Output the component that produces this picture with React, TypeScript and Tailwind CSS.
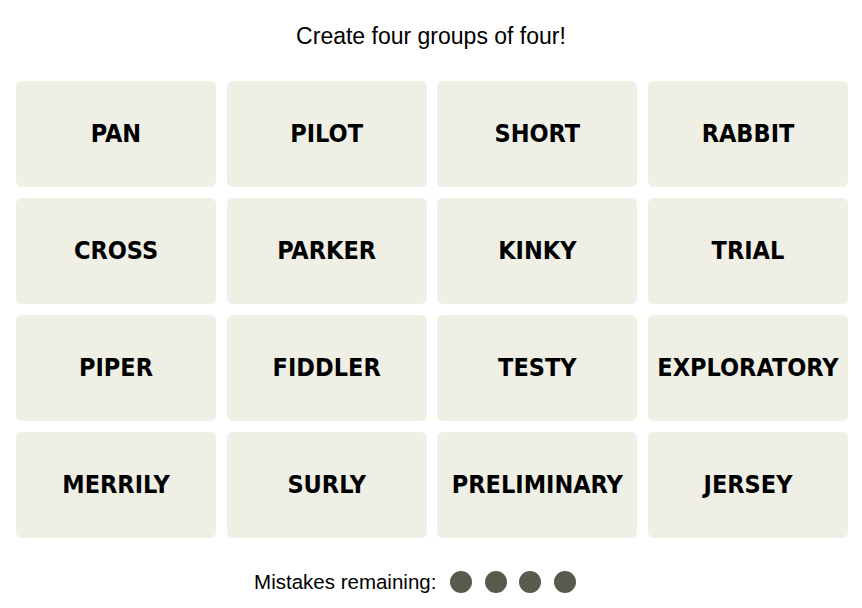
const words = [
  "PAN", "PILOT", "SHORT", "RABBIT",
  "CROSS", "PARKER", "KINKY", "TRIAL",
  "PIPER", "FIDDLER", "TESTY", "EXPLORATORY",
  "MERRILY", "SURLY", "PRELIMINARY", "JERSEY",
];

const font = { fontFamily: '"Liberation Sans", Arial, sans-serif' };
const tileFont = { fontFamily: '"DejaVu Sans Condensed", "Liberation Sans", Arial, sans-serif' };

export default function App() {
  return (
    <div className="w-[862px] h-[608px] bg-white text-black flex flex-col items-center" style={font}>
      <p className="mt-[22px] h-[28px] text-[23px] leading-[28px]">Create four groups of four!</p>

      <div className="mt-[31px] ml-[2px] w-[832px] grid grid-cols-4 gap-x-[10.67px] gap-y-[11.67px]">
        {words.map((w) => (
          <div
            key={w}
            className="h-[105.5px] rounded-md bg-[#efefe6] flex items-center justify-center text-[25px] font-bold uppercase"
            style={tileFont}
          >
            {w}
          </div>
        ))}
      </div>

      <div className="mt-[29px] mr-[32px] flex items-center gap-[14px] text-[20.5px]">
        <span>Mistakes remaining:</span>
        <div className="flex gap-[12.5px]">
          {[0, 1, 2, 3].map((i) => (
            <span key={i} className="w-[22px] h-[22px] rounded-full bg-[#5a594e]" />
          ))}
        </div>
      </div>
    </div>
  );
}
